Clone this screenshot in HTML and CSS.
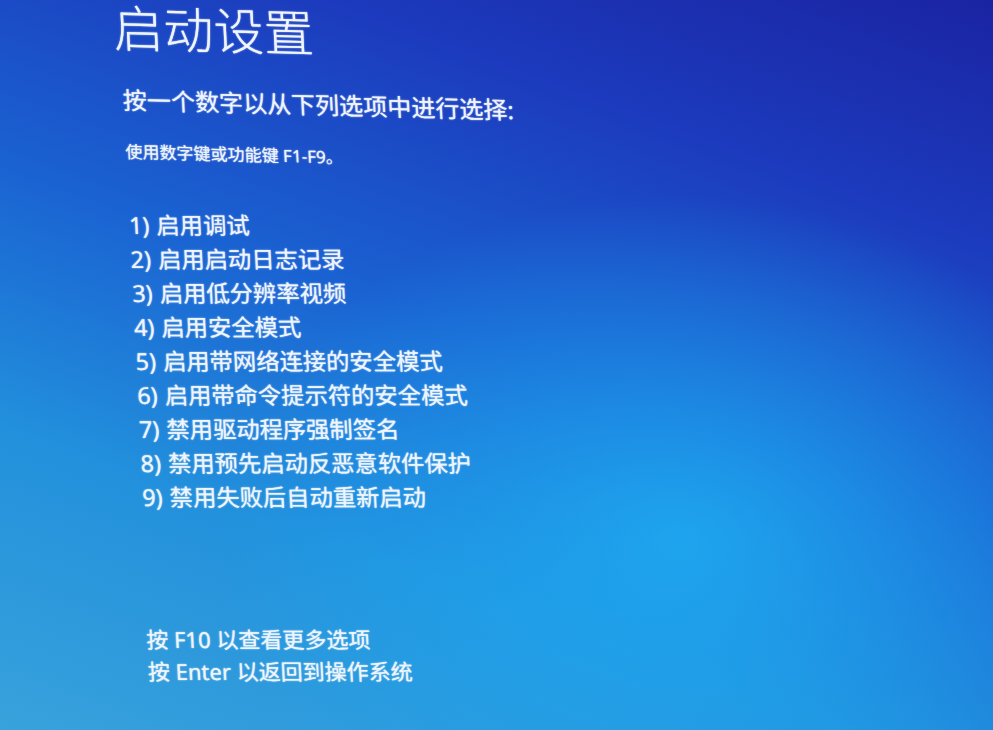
FILE: index.html
```html
<!DOCTYPE html>
<html lang="zh-CN">
<head>
<meta charset="utf-8">
<title>启动设置</title>
<link rel="stylesheet" href="styles.css">
</head>
<body>
<div class="screen">
  <div class="content">
    <header class="head">
      <h1 class="title">启动设置</h1>
      <p class="subtitle">按一个数字以从下列选项中进行选择:</p>
      <p class="desc">使用数字键或功能键 F1-F9。</p>
    </header>
    <ol class="options">
      <li>1) 启用调试</li>
      <li>2) 启用启动日志记录</li>
      <li>3) 启用低分辨率视频</li>
      <li>4) 启用安全模式</li>
      <li>5) 启用带网络连接的安全模式</li>
      <li>6) 启用带命令提示符的安全模式</li>
      <li>7) 禁用驱动程序强制签名</li>
      <li>8) 禁用预先启动反恶意软件保护</li>
      <li>9) 禁用失败后自动重新启动</li>
    </ol>
    <div class="footer">
      <p>按 F10 以查看更多选项</p>
      <p>按 Enter 以返回到操作系统</p>
    </div>
  </div>
</div>
</body>
</html>
```

FILE: styles.css
```css
html, body {
  margin: 0;
  padding: 0;
}

body {
  font-family: "Noto Sans", "Noto Sans CJK SC", sans-serif;
  color: #eef5ff;
}

.screen {
  width: 993px;
  height: 730px;
  overflow: hidden;
  background:
    radial-gradient(ellipse 620px 460px at 680px 540px, rgba(30, 172, 242, 0.85), rgba(30, 172, 242, 0) 75%),
    linear-gradient(200deg, #1a24a2 0%, #1c3abd 22%, #1a62d2 48%, #2290dc 72%, #38a2dc 100%);
}

.content {
  padding: 0 0 0 118px;
  transform: skewX(2.8deg);
  transform-origin: 0 0;
  text-shadow: 0 0 2px rgba(255, 255, 255, 0.5), 0 0 1px rgba(255, 255, 255, 0.6);
}

.head {
  transform: skewY(1.5deg);
  transform-origin: 118px 0;
}

.title {
  margin: 0 0 0 -6px;
  padding-top: 8px;
  font-family: "Liberation Sans", "Noto Sans CJK SC", sans-serif;
  font-weight: 300;
  font-size: 50px;
  line-height: 50px;
}

.subtitle {
  margin: 33px 0 0;
  font-size: 24px;
  line-height: 24px;
}

.desc {
  margin: 31px 0 0;
  font-size: 17px;
  line-height: 17px;
}

.options {
  list-style: none;
  margin: 45px 0 0;
  padding: 0;
}

.options li {
  font-size: 23.3px;
  line-height: 34px;
  word-spacing: 1px;
  white-space: nowrap;
}

.footer {
  margin: 110px 0 0 -3px;
}

.footer p {
  margin: 0;
  font-size: 22px;
  line-height: 31.5px;
}
```
